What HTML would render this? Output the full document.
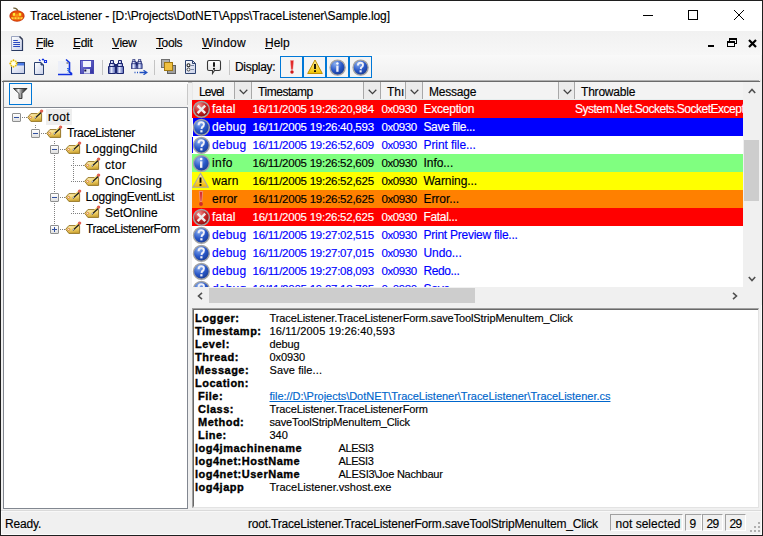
<!DOCTYPE html>
<html><head><meta charset="utf-8"><style>
html,body{margin:0;padding:0;width:763px;height:536px;overflow:hidden;background:#f0f0f0}
body{position:relative;font-family:"Liberation Sans",sans-serif}
.r{position:absolute;display:block}
.t{position:absolute;white-space:nowrap;font-family:"Liberation Sans",sans-serif;-webkit-text-stroke:0.15px currentColor}
</style></head><body>
<div class="r" style="left:0px;top:0px;width:763px;height:536px;background:#f0f0f0"></div>
<div class="r" style="left:0px;top:0px;width:763px;height:31px;background:#fff"></div>
<svg class="r" style="left:8px;top:6px" width="18" height="18" viewBox="0 0 18 18">
<defs><radialGradient id="pk" cx="50%" cy="50%" r="55%"><stop offset="0" stop-color="#ff8a10"/><stop offset="0.75" stop-color="#e04808"/><stop offset="1" stop-color="#b02808"/></radialGradient></defs>
<path d="M5.3 2.2 Q7.5 2 8.6 3 L10 4.6" stroke="#6a5a30" stroke-width="1.3" fill="none"/>
<ellipse cx="9" cy="10" rx="7.6" ry="5.8" fill="url(#pk)"/>
<path d="M4.8 7.2 L7.2 6.8 L7.2 9.8 L4.8 9.8Z M10.8 6.8 L13.2 7.2 L13.2 9.8 L10.8 9.8Z" fill="#ffe838"/>
<path d="M8.2 8.5 L9.8 8.5 L9 10Z" fill="#ffc020"/>
<path d="M3 11.2 L15 11.2 L14 13.2 L4 13.2Z" fill="#ffd838"/>
<path d="M6 11 V13.4 M9 11 V13.4 M12 11 V13.4" stroke="#e86010" stroke-width="0.8"/>
</svg>
<div class="t" style="left:30px;top:10px;font-size:12px;line-height:12px;color:#000;letter-spacing:-0.08px;">TraceListener - [D:\Projects\DotNET\Apps\TraceListener\Sample.log]</div>
<div class="r" style="left:643px;top:15px;width:10px;height:1px;background:#000"></div>
<div class="r" style="left:688px;top:10px;width:10px;height:10px;border:1px solid #000;box-sizing:border-box"></div>
<svg class="r" style="left:734px;top:10px" width="10" height="10" viewBox="0 0 10 10"><path d="M0 0 L10 10 M10 0 L0 10" stroke="#000" stroke-width="1"/></svg>
<div class="r" style="left:1px;top:31px;width:761px;height:24px;background:linear-gradient(#f1f1f1,#f7f7f7)"></div>
<svg class="r" style="left:10px;top:35px" width="16" height="17" viewBox="0 0 16 17">
<defs><linearGradient id="dg" x1="0" y1="0" x2="1" y2="1"><stop offset="0" stop-color="#fff"/><stop offset="1" stop-color="#c8d0e8"/></linearGradient></defs>
<path d="M1.5 1.5 H9.5 L12.5 4.5 V15.5 H1.5Z" fill="url(#dg)" stroke="#9aa4c0"/>
<path d="M12.5 4.5 V15.5 H1.5" fill="none" stroke="#283860" stroke-width="1.2"/>
<path d="M9.5 1.5 L12.5 4.5" stroke="#303850" stroke-width="1.6"/>
<path d="M3.2 5.5 H7.8 M3.2 7.5 H10 M3.2 9.5 H10 M3.2 11.5 H10" stroke="#2848c0" stroke-width="1.2"/>
</svg>
<div class="t" style="left:36px;top:37px;font-size:12px;line-height:12px;color:#000;letter-spacing:-0.45px;">File</div>
<div class="r" style="left:36px;top:48px;width:7px;height:1px;background:#000"></div>
<div class="t" style="left:73px;top:37px;font-size:12px;line-height:12px;color:#000;letter-spacing:-0.3px;">Edit</div>
<div class="r" style="left:73px;top:48px;width:7px;height:1px;background:#000"></div>
<div class="t" style="left:112px;top:37px;font-size:12px;line-height:12px;color:#000;letter-spacing:-0.4px;">View</div>
<div class="r" style="left:112px;top:48px;width:7px;height:1px;background:#000"></div>
<div class="t" style="left:156px;top:37px;font-size:12px;line-height:12px;color:#000;letter-spacing:-0.38px;">Tools</div>
<div class="r" style="left:156px;top:48px;width:7px;height:1px;background:#000"></div>
<div class="t" style="left:202px;top:37px;font-size:12px;line-height:12px;color:#000;letter-spacing:0.18px;">Window</div>
<div class="r" style="left:202px;top:48px;width:7px;height:1px;background:#000"></div>
<div class="t" style="left:265px;top:37px;font-size:12px;line-height:12px;color:#000;">Help</div>
<div class="r" style="left:265px;top:48px;width:7px;height:1px;background:#000"></div>
<div class="r" style="left:708px;top:45px;width:6px;height:2px;background:#000"></div>
<div class="r" style="left:729px;top:38px;width:8px;height:6px;border:1px solid #000;border-top-width:2px;box-sizing:border-box"></div>
<div class="r" style="left:727px;top:41px;width:8px;height:6px;border:1px solid #000;border-top-width:2px;box-sizing:border-box;background:#f6f6f6"></div>
<svg class="r" style="left:748px;top:39px" width="9" height="9" viewBox="0 0 9 9"><path d="M1 1 L8 8 M8 1 L1 8" stroke="#000" stroke-width="2.2"/></svg>
<div class="r" style="left:1px;top:55px;width:760px;height:28px;background:linear-gradient(#f9f9f9,#efefef);border-bottom:1px solid #c0c0c0;border-radius:0 0 4px 4px;box-sizing:border-box"></div>
<div class="r" style="left:2px;top:81px;width:758px;height:1px;background:#6a6a6a"></div>
<div class="r" style="left:3px;top:80px;width:756px;height:1px;background:#b0b0b0"></div>
<svg class="r" style="left:9px;top:58px" width="17" height="17" viewBox="0 0 17 17">
<defs><linearGradient id="wg" x1="0" y1="0" x2="1" y2="1"><stop offset="0" stop-color="#fff"/><stop offset="1" stop-color="#c4cce8"/></linearGradient></defs>
<rect x="2.5" y="4.5" width="13" height="11" fill="url(#wg)" stroke="#2d4270"/>
<rect x="3" y="5" width="12" height="2.5" fill="#4a7ae8"/>
<circle cx="4.5" cy="5.5" r="3.6" fill="#fff8b0"/>
<circle cx="4.5" cy="5.5" r="1.6" fill="#ffffff"/>
<g fill="#e0b000"><circle cx="4.5" cy="2.2" r="0.9"/><circle cx="4.5" cy="8.8" r="0.9"/><circle cx="1.2" cy="5.5" r="0.9"/><circle cx="7.8" cy="5.5" r="0.9"/><circle cx="2.2" cy="3.2" r="0.8"/><circle cx="6.8" cy="3.2" r="0.8"/><circle cx="2.2" cy="7.8" r="0.8"/><circle cx="6.8" cy="7.8" r="0.8"/></g>
</svg>
<svg class="r" style="left:33px;top:58px" width="15" height="18" viewBox="0 0 15 18">
<path d="M1.5 4.5 H8 L10.5 7 V16.5 H1.5Z" fill="url(#dg)" stroke="#2d4270" stroke-linejoin="miter"/>
<path d="M8 4.5 V7 H10.5" fill="#304070" stroke="#2d4270"/>
<path d="M6 1.5 L7.5 3 M9 1 L10 2 L11 1 M11.5 2.5 H13.5 V4.5 H11.5Z" stroke="#1030e0" fill="none" stroke-width="1.1"/>
</svg>
<svg class="r" style="left:56px;top:58px" width="17" height="18" viewBox="0 0 17 18">
<rect x="2" y="3" width="10" height="13" fill="#eceff8"/>
<path d="M10 1.5 L13.5 4.5 V14 L15.5 15.5 V16.5 H2" stroke="#1030e0" stroke-width="1.6" fill="none"/>
<path d="M11 10.5 H13 L11.5 12.5 H13.5 L12 14.5" stroke="#3a70e0" fill="none"/>
<path d="M10.5 5 L12.5 5" stroke="#404040"/>
</svg>
<svg class="r" style="left:79px;top:59px" width="16" height="16" viewBox="0 0 16 16">
<defs><linearGradient id="flg" x1="0" y1="0" x2="1" y2="1"><stop offset="0" stop-color="#8080e0"/><stop offset="1" stop-color="#3030a0"/></linearGradient></defs>
<rect x="1.5" y="1.5" width="13" height="13" fill="url(#flg)" stroke="#4848b0"/>
<rect x="4" y="2" width="8" height="6" fill="#f4f6fc"/>
<rect x="5" y="10" width="6" height="4.5" fill="#e0e4f4"/>
<rect x="5.3" y="10.5" width="2" height="2" fill="#101040"/>
</svg>
<div class="r" style="left:102px;top:60px;width:1px;height:15px;background:#c4c4c4"></div>
<svg class="r" style="left:108px;top:60px" width="16" height="14" viewBox="0 0 16 14"><defs><linearGradient id="bng" x1="0" y1="0" x2="1" y2="0"><stop offset="0" stop-color="#2a3a90"/><stop offset="0.4" stop-color="#e8ecff"/><stop offset="1" stop-color="#5060b0"/></linearGradient></defs><path d="M2.5 0.5 H5.5 V3.5 H6.5 V6.5 H7.5 V13.5 H0.5 V6.5 H1.5 V3.5 H2.5Z" fill="url(#bng)" stroke="#1c2670" stroke-width="1"/>
<path d="M1 6.5 H7" stroke="#1c2670"/><path d="M2 3.5 H6" stroke="#1c2670"/><path d="M10.5 0.5 H13.5 V3.5 H14.5 V6.5 H15.5 V13.5 H8.5 V6.5 H9.5 V3.5 H10.5Z" fill="url(#bng)" stroke="#1c2670" stroke-width="1"/>
<path d="M9 6.5 H15" stroke="#1c2670"/><path d="M10 3.5 H14" stroke="#1c2670"/><rect x="7" y="4" width="2" height="4" fill="#1c2670"/></svg>
<svg class="r" style="left:131px;top:59px" width="12" height="10" viewBox="0 0 12 10"><g transform="scale(0.72)"><path d="M2.5 0.5 H5.5 V3.5 H6.5 V6.5 H7.5 V13.5 H0.5 V6.5 H1.5 V3.5 H2.5Z" fill="url(#bng)" stroke="#1c2670" stroke-width="1"/>
<path d="M1 6.5 H7" stroke="#1c2670"/><path d="M2 3.5 H6" stroke="#1c2670"/><path d="M10.5 0.5 H13.5 V3.5 H14.5 V6.5 H15.5 V13.5 H8.5 V6.5 H9.5 V3.5 H10.5Z" fill="url(#bng)" stroke="#1c2670" stroke-width="1"/>
<path d="M9 6.5 H15" stroke="#1c2670"/><path d="M10 3.5 H14" stroke="#1c2670"/><rect x="7" y="4" width="2" height="5" fill="#1c2670"/></g></svg>
<svg class="r" style="left:133px;top:70px" width="15" height="5" viewBox="0 0 15 5"><path d="M1.5 2.5 H2.5 M4 2.5 H5 M6.5 2.5 H13" stroke="#2050c0" stroke-width="1.3"/><path d="M10.5 0.3 L13.8 2.5 L10.5 4.7" stroke="#2050c0" stroke-width="1.3" fill="none"/></svg>
<div class="r" style="left:154px;top:60px;width:1px;height:15px;background:#c4c4c4"></div>
<svg class="r" style="left:160px;top:58px" width="17" height="17" viewBox="0 0 17 17">
<rect x="1.5" y="1.5" width="8" height="8" fill="#b0b0b0" stroke="#707070"/>
<rect x="7.5" y="7.5" width="8" height="8" fill="#a0a0a0" stroke="#606060"/>
<rect x="4.5" y="4.5" width="8" height="8" fill="#f0c040" stroke="#a07810"/>
</svg>
<svg class="r" style="left:184px;top:58px" width="14" height="17" viewBox="0 0 14 17">
<path d="M1.5 2.5 H8.5 L11.5 5.5 V15.5 H1.5Z" fill="url(#dg)" stroke="#2d4270"/>
<path d="M8.5 2.5 V5.5 H11.5" fill="none" stroke="#2d4270"/>
<circle cx="4.5" cy="7.3" r="1.5" fill="#fff" stroke="#202020" stroke-width="1.1"/>
<circle cx="4.5" cy="11.5" r="1.5" fill="#fff" stroke="#404040" stroke-width="1"/>
<path d="M7 7.5 H10 M7 11.5 H10" stroke="#7888a8"/>
</svg>
<svg class="r" style="left:206px;top:59px" width="16" height="16" viewBox="0 0 16 16">
<defs><linearGradient id="sbg" x1="0" y1="0" x2="0" y2="1"><stop offset="0" stop-color="#ffffff"/><stop offset="1" stop-color="#e0e0e0"/></linearGradient></defs>
<path d="M3 1.5 H13 Q14.5 1.5 14.5 3 V10 Q14.5 11.5 13 11.5 H8.5 L6.5 14.5 V11.5 H3 Q1.5 11.5 1.5 10 V3 Q1.5 1.5 3 1.5Z" fill="url(#sbg)" stroke="#383838" stroke-width="1.1"/>
<path d="M8 3.2 V7.8" stroke="#000" stroke-width="1.8"/><rect x="7.1" y="8.9" width="1.8" height="1.8" fill="#000"/>
</svg>
<div class="r" style="left:229px;top:60px;width:1px;height:15px;background:#c4c4c4"></div>
<div class="t" style="left:235px;top:61px;font-size:12px;line-height:12px;color:#000;letter-spacing:-0.3px;">Display:</div>
<div class="r" style="left:280px;top:56px;width:23px;height:22px;border:1px solid #0078d7;background:#f4f4f4;box-sizing:border-box"></div>
<div class="r" style="left:303px;top:56px;width:23px;height:22px;border:1px solid #0078d7;background:#f4f4f4;box-sizing:border-box"></div>
<div class="r" style="left:326px;top:56px;width:23px;height:22px;border:1px solid #0078d7;background:#f4f4f4;box-sizing:border-box"></div>
<div class="r" style="left:349px;top:56px;width:23px;height:22px;border:1px solid #0078d7;background:#f4f4f4;box-sizing:border-box"></div>
<svg class="r" style="left:284px;top:59px" width="16" height="16" viewBox="0 0 16 16">
<path d="M6.5 1.5 H9.5 L8.8 10.5 H7.2Z" fill="#e02020" stroke="#e88" stroke-width="0.5"/>
<circle cx="8" cy="13" r="1.7" fill="#d01818"/>
</svg>
<svg class="r" style="left:307px;top:59px" width="16" height="16" viewBox="0 0 16 16">
<defs><linearGradient id="yg" x1="0" y1="0" x2="0" y2="1"><stop offset="0" stop-color="#fff4a0"/><stop offset="1" stop-color="#f0c000"/></linearGradient></defs>
<path d="M8 1 L15.3 14.5 H0.7Z" fill="url(#yg)" stroke="#c09000"/>
<path d="M8 5 V10" stroke="#000" stroke-width="1.8"/><rect x="7.1" y="11.2" width="1.8" height="1.8" fill="#000"/>
</svg>
<div class="r" style="left:3px;top:82px;width:185px;height:26px;background:linear-gradient(#fcfcfc,#f0f0f0);border-left:1px solid #828790;box-sizing:border-box"></div>
<div class="r" style="left:187px;top:84px;width:1px;height:21px;background:#c8c8c8"></div>
<div class="r" style="left:9px;top:83px;width:23px;height:22px;border:1px solid #0078d7;background:#f8f8f8;box-sizing:border-box"></div>
<svg class="r" style="left:13px;top:88px" width="15" height="11" viewBox="0 0 15 11">
<defs><linearGradient id="fg" x1="0" y1="0" x2="1" y2="0"><stop offset="0" stop-color="#181818"/><stop offset="0.35" stop-color="#f0f0f0"/><stop offset="0.65" stop-color="#707070"/><stop offset="1" stop-color="#101010"/></linearGradient></defs>
<path d="M0.5 0.5 H14 L9 5.5 V10.5 H6 V5.5Z" fill="url(#fg)" stroke="#202020" stroke-width="0.8"/>
</svg>
<div class="r" style="left:3px;top:107px;width:185px;height:402px;background:#fff;border:1px solid #828790;box-sizing:border-box"></div>
<div class="r" style="left:35px;top:125px;width:1px;height:1px;background:#808080"></div>
<div class="r" style="left:35px;top:127px;width:1px;height:1px;background:#808080"></div>
<div class="r" style="left:54px;top:141px;width:1px;height:1px;background:#808080"></div>
<div class="r" style="left:54px;top:143px;width:1px;height:1px;background:#808080"></div>
<div class="r" style="left:54px;top:145px;width:1px;height:1px;background:#808080"></div>
<div class="r" style="left:54px;top:147px;width:1px;height:1px;background:#808080"></div>
<div class="r" style="left:54px;top:149px;width:1px;height:1px;background:#808080"></div>
<div class="r" style="left:54px;top:151px;width:1px;height:1px;background:#808080"></div>
<div class="r" style="left:54px;top:153px;width:1px;height:1px;background:#808080"></div>
<div class="r" style="left:54px;top:155px;width:1px;height:1px;background:#808080"></div>
<div class="r" style="left:54px;top:157px;width:1px;height:1px;background:#808080"></div>
<div class="r" style="left:54px;top:159px;width:1px;height:1px;background:#808080"></div>
<div class="r" style="left:54px;top:161px;width:1px;height:1px;background:#808080"></div>
<div class="r" style="left:54px;top:163px;width:1px;height:1px;background:#808080"></div>
<div class="r" style="left:54px;top:165px;width:1px;height:1px;background:#808080"></div>
<div class="r" style="left:54px;top:167px;width:1px;height:1px;background:#808080"></div>
<div class="r" style="left:54px;top:169px;width:1px;height:1px;background:#808080"></div>
<div class="r" style="left:54px;top:171px;width:1px;height:1px;background:#808080"></div>
<div class="r" style="left:54px;top:173px;width:1px;height:1px;background:#808080"></div>
<div class="r" style="left:54px;top:175px;width:1px;height:1px;background:#808080"></div>
<div class="r" style="left:54px;top:177px;width:1px;height:1px;background:#808080"></div>
<div class="r" style="left:54px;top:179px;width:1px;height:1px;background:#808080"></div>
<div class="r" style="left:54px;top:181px;width:1px;height:1px;background:#808080"></div>
<div class="r" style="left:54px;top:183px;width:1px;height:1px;background:#808080"></div>
<div class="r" style="left:54px;top:185px;width:1px;height:1px;background:#808080"></div>
<div class="r" style="left:54px;top:187px;width:1px;height:1px;background:#808080"></div>
<div class="r" style="left:54px;top:189px;width:1px;height:1px;background:#808080"></div>
<div class="r" style="left:54px;top:191px;width:1px;height:1px;background:#808080"></div>
<div class="r" style="left:54px;top:193px;width:1px;height:1px;background:#808080"></div>
<div class="r" style="left:54px;top:195px;width:1px;height:1px;background:#808080"></div>
<div class="r" style="left:54px;top:197px;width:1px;height:1px;background:#808080"></div>
<div class="r" style="left:54px;top:199px;width:1px;height:1px;background:#808080"></div>
<div class="r" style="left:54px;top:201px;width:1px;height:1px;background:#808080"></div>
<div class="r" style="left:54px;top:203px;width:1px;height:1px;background:#808080"></div>
<div class="r" style="left:54px;top:205px;width:1px;height:1px;background:#808080"></div>
<div class="r" style="left:54px;top:207px;width:1px;height:1px;background:#808080"></div>
<div class="r" style="left:54px;top:209px;width:1px;height:1px;background:#808080"></div>
<div class="r" style="left:54px;top:211px;width:1px;height:1px;background:#808080"></div>
<div class="r" style="left:54px;top:213px;width:1px;height:1px;background:#808080"></div>
<div class="r" style="left:54px;top:215px;width:1px;height:1px;background:#808080"></div>
<div class="r" style="left:54px;top:217px;width:1px;height:1px;background:#808080"></div>
<div class="r" style="left:54px;top:219px;width:1px;height:1px;background:#808080"></div>
<div class="r" style="left:54px;top:221px;width:1px;height:1px;background:#808080"></div>
<div class="r" style="left:54px;top:223px;width:1px;height:1px;background:#808080"></div>
<div class="r" style="left:54px;top:225px;width:1px;height:1px;background:#808080"></div>
<div class="r" style="left:54px;top:227px;width:1px;height:1px;background:#808080"></div>
<div class="r" style="left:73px;top:157px;width:1px;height:1px;background:#808080"></div>
<div class="r" style="left:73px;top:159px;width:1px;height:1px;background:#808080"></div>
<div class="r" style="left:73px;top:161px;width:1px;height:1px;background:#808080"></div>
<div class="r" style="left:73px;top:163px;width:1px;height:1px;background:#808080"></div>
<div class="r" style="left:73px;top:165px;width:1px;height:1px;background:#808080"></div>
<div class="r" style="left:73px;top:167px;width:1px;height:1px;background:#808080"></div>
<div class="r" style="left:73px;top:169px;width:1px;height:1px;background:#808080"></div>
<div class="r" style="left:73px;top:171px;width:1px;height:1px;background:#808080"></div>
<div class="r" style="left:73px;top:173px;width:1px;height:1px;background:#808080"></div>
<div class="r" style="left:73px;top:175px;width:1px;height:1px;background:#808080"></div>
<div class="r" style="left:73px;top:177px;width:1px;height:1px;background:#808080"></div>
<div class="r" style="left:73px;top:179px;width:1px;height:1px;background:#808080"></div>
<div class="r" style="left:73px;top:205px;width:1px;height:1px;background:#808080"></div>
<div class="r" style="left:73px;top:207px;width:1px;height:1px;background:#808080"></div>
<div class="r" style="left:73px;top:209px;width:1px;height:1px;background:#808080"></div>
<div class="r" style="left:73px;top:211px;width:1px;height:1px;background:#808080"></div>
<div class="r" style="left:46px;top:109px;width:26px;height:16px;background:#eeeeee"></div>
<div class="r" style="left:12px;top:113px;width:9px;height:9px;border:1px solid #8e8f8f;border-radius:1px;background:linear-gradient(#fff,#e0e0e0);box-sizing:border-box"></div>
<div class="r" style="left:14px;top:117px;width:5px;height:1px;background:#3050a0"></div>
<div class="r" style="left:22px;top:117px;width:1px;height:1px;background:#808080"></div>
<div class="r" style="left:24px;top:117px;width:1px;height:1px;background:#808080"></div>
<div class="r" style="left:26px;top:117px;width:1px;height:1px;background:#808080"></div>
<svg class="r" style="left:27px;top:108px" width="17" height="16" viewBox="0 0 17 16">
<defs><linearGradient id="tg" x1="0" y1="0" x2="0.3" y2="1"><stop offset="0" stop-color="#fff6c8"/><stop offset="0.6" stop-color="#f0d068"/><stop offset="1" stop-color="#d0a838"/></linearGradient></defs>
<path d="M0.7 9.3 L3.9 5.6 H14.6 V13.4 H3.9Z" fill="url(#tg)" stroke="#98782a" stroke-width="1"/>
<circle cx="3.7" cy="9.4" r="1.05" fill="#fff" stroke="#d07020" stroke-width="0.8"/>
<path d="M8.2 9.2 L13.6 3.8" stroke="#f2d870" stroke-width="2.2"/>
<path d="M8 10.3 L14.4 4.2" stroke="#1e1e1e" stroke-width="1.2"/>
<path d="M6.6 10.6 L8.6 8.2 L9.4 10Z" fill="#b8b8c0"/>
<circle cx="14.6" cy="3.1" r="1.7" fill="#e06050"/>
</svg>
<div class="t" style="left:48px;top:111px;font-size:12px;line-height:12px;color:#000;letter-spacing:0.3px;">root</div>
<div class="r" style="left:31px;top:129px;width:9px;height:9px;border:1px solid #8e8f8f;border-radius:1px;background:linear-gradient(#fff,#e0e0e0);box-sizing:border-box"></div>
<div class="r" style="left:33px;top:133px;width:5px;height:1px;background:#3050a0"></div>
<div class="r" style="left:41px;top:133px;width:1px;height:1px;background:#808080"></div>
<div class="r" style="left:43px;top:133px;width:1px;height:1px;background:#808080"></div>
<div class="r" style="left:45px;top:133px;width:1px;height:1px;background:#808080"></div>
<svg class="r" style="left:46px;top:124px" width="17" height="16" viewBox="0 0 17 16">
<defs><linearGradient id="tg" x1="0" y1="0" x2="0.3" y2="1"><stop offset="0" stop-color="#fff6c8"/><stop offset="0.6" stop-color="#f0d068"/><stop offset="1" stop-color="#d0a838"/></linearGradient></defs>
<path d="M0.7 9.3 L3.9 5.6 H14.6 V13.4 H3.9Z" fill="url(#tg)" stroke="#98782a" stroke-width="1"/>
<circle cx="3.7" cy="9.4" r="1.05" fill="#fff" stroke="#d07020" stroke-width="0.8"/>
<path d="M8.2 9.2 L13.6 3.8" stroke="#f2d870" stroke-width="2.2"/>
<path d="M8 10.3 L14.4 4.2" stroke="#1e1e1e" stroke-width="1.2"/>
<path d="M6.6 10.6 L8.6 8.2 L9.4 10Z" fill="#b8b8c0"/>
<circle cx="14.6" cy="3.1" r="1.7" fill="#e06050"/>
</svg>
<div class="t" style="left:67px;top:127px;font-size:12px;line-height:12px;color:#000;letter-spacing:-0.39px;">TraceListener</div>
<div class="r" style="left:50px;top:145px;width:9px;height:9px;border:1px solid #8e8f8f;border-radius:1px;background:linear-gradient(#fff,#e0e0e0);box-sizing:border-box"></div>
<div class="r" style="left:52px;top:149px;width:5px;height:1px;background:#3050a0"></div>
<div class="r" style="left:60px;top:149px;width:1px;height:1px;background:#808080"></div>
<div class="r" style="left:62px;top:149px;width:1px;height:1px;background:#808080"></div>
<div class="r" style="left:64px;top:149px;width:1px;height:1px;background:#808080"></div>
<svg class="r" style="left:65px;top:140px" width="17" height="16" viewBox="0 0 17 16">
<defs><linearGradient id="tg" x1="0" y1="0" x2="0.3" y2="1"><stop offset="0" stop-color="#fff6c8"/><stop offset="0.6" stop-color="#f0d068"/><stop offset="1" stop-color="#d0a838"/></linearGradient></defs>
<path d="M0.7 9.3 L3.9 5.6 H14.6 V13.4 H3.9Z" fill="url(#tg)" stroke="#98782a" stroke-width="1"/>
<circle cx="3.7" cy="9.4" r="1.05" fill="#fff" stroke="#d07020" stroke-width="0.8"/>
<path d="M8.2 9.2 L13.6 3.8" stroke="#f2d870" stroke-width="2.2"/>
<path d="M8 10.3 L14.4 4.2" stroke="#1e1e1e" stroke-width="1.2"/>
<path d="M6.6 10.6 L8.6 8.2 L9.4 10Z" fill="#b8b8c0"/>
<circle cx="14.6" cy="3.1" r="1.7" fill="#e06050"/>
</svg>
<div class="t" style="left:85.6px;top:143px;font-size:12px;line-height:12px;color:#000;letter-spacing:0.15px;">LoggingChild</div>
<div class="r" style="left:71px;top:165px;width:1px;height:1px;background:#808080"></div>
<div class="r" style="left:73px;top:165px;width:1px;height:1px;background:#808080"></div>
<div class="r" style="left:75px;top:165px;width:1px;height:1px;background:#808080"></div>
<div class="r" style="left:77px;top:165px;width:1px;height:1px;background:#808080"></div>
<div class="r" style="left:79px;top:165px;width:1px;height:1px;background:#808080"></div>
<div class="r" style="left:81px;top:165px;width:1px;height:1px;background:#808080"></div>
<div class="r" style="left:83px;top:165px;width:1px;height:1px;background:#808080"></div>
<svg class="r" style="left:84px;top:156px" width="17" height="16" viewBox="0 0 17 16">
<defs><linearGradient id="tg" x1="0" y1="0" x2="0.3" y2="1"><stop offset="0" stop-color="#fff6c8"/><stop offset="0.6" stop-color="#f0d068"/><stop offset="1" stop-color="#d0a838"/></linearGradient></defs>
<path d="M0.7 9.3 L3.9 5.6 H14.6 V13.4 H3.9Z" fill="url(#tg)" stroke="#98782a" stroke-width="1"/>
<circle cx="3.7" cy="9.4" r="1.05" fill="#fff" stroke="#d07020" stroke-width="0.8"/>
<path d="M8.2 9.2 L13.6 3.8" stroke="#f2d870" stroke-width="2.2"/>
<path d="M8 10.3 L14.4 4.2" stroke="#1e1e1e" stroke-width="1.2"/>
<path d="M6.6 10.6 L8.6 8.2 L9.4 10Z" fill="#b8b8c0"/>
<circle cx="14.6" cy="3.1" r="1.7" fill="#e06050"/>
</svg>
<div class="t" style="left:105px;top:159px;font-size:12px;line-height:12px;color:#000;letter-spacing:0.3px;">ctor</div>
<div class="r" style="left:71px;top:181px;width:1px;height:1px;background:#808080"></div>
<div class="r" style="left:73px;top:181px;width:1px;height:1px;background:#808080"></div>
<div class="r" style="left:75px;top:181px;width:1px;height:1px;background:#808080"></div>
<div class="r" style="left:77px;top:181px;width:1px;height:1px;background:#808080"></div>
<div class="r" style="left:79px;top:181px;width:1px;height:1px;background:#808080"></div>
<div class="r" style="left:81px;top:181px;width:1px;height:1px;background:#808080"></div>
<div class="r" style="left:83px;top:181px;width:1px;height:1px;background:#808080"></div>
<svg class="r" style="left:84px;top:172px" width="17" height="16" viewBox="0 0 17 16">
<defs><linearGradient id="tg" x1="0" y1="0" x2="0.3" y2="1"><stop offset="0" stop-color="#fff6c8"/><stop offset="0.6" stop-color="#f0d068"/><stop offset="1" stop-color="#d0a838"/></linearGradient></defs>
<path d="M0.7 9.3 L3.9 5.6 H14.6 V13.4 H3.9Z" fill="url(#tg)" stroke="#98782a" stroke-width="1"/>
<circle cx="3.7" cy="9.4" r="1.05" fill="#fff" stroke="#d07020" stroke-width="0.8"/>
<path d="M8.2 9.2 L13.6 3.8" stroke="#f2d870" stroke-width="2.2"/>
<path d="M8 10.3 L14.4 4.2" stroke="#1e1e1e" stroke-width="1.2"/>
<path d="M6.6 10.6 L8.6 8.2 L9.4 10Z" fill="#b8b8c0"/>
<circle cx="14.6" cy="3.1" r="1.7" fill="#e06050"/>
</svg>
<div class="t" style="left:105px;top:175px;font-size:12px;line-height:12px;color:#000;letter-spacing:0.11px;">OnClosing</div>
<div class="r" style="left:50px;top:193px;width:9px;height:9px;border:1px solid #8e8f8f;border-radius:1px;background:linear-gradient(#fff,#e0e0e0);box-sizing:border-box"></div>
<div class="r" style="left:52px;top:197px;width:5px;height:1px;background:#3050a0"></div>
<div class="r" style="left:60px;top:197px;width:1px;height:1px;background:#808080"></div>
<div class="r" style="left:62px;top:197px;width:1px;height:1px;background:#808080"></div>
<div class="r" style="left:64px;top:197px;width:1px;height:1px;background:#808080"></div>
<svg class="r" style="left:65px;top:188px" width="17" height="16" viewBox="0 0 17 16">
<defs><linearGradient id="tg" x1="0" y1="0" x2="0.3" y2="1"><stop offset="0" stop-color="#fff6c8"/><stop offset="0.6" stop-color="#f0d068"/><stop offset="1" stop-color="#d0a838"/></linearGradient></defs>
<path d="M0.7 9.3 L3.9 5.6 H14.6 V13.4 H3.9Z" fill="url(#tg)" stroke="#98782a" stroke-width="1"/>
<circle cx="3.7" cy="9.4" r="1.05" fill="#fff" stroke="#d07020" stroke-width="0.8"/>
<path d="M8.2 9.2 L13.6 3.8" stroke="#f2d870" stroke-width="2.2"/>
<path d="M8 10.3 L14.4 4.2" stroke="#1e1e1e" stroke-width="1.2"/>
<path d="M6.6 10.6 L8.6 8.2 L9.4 10Z" fill="#b8b8c0"/>
<circle cx="14.6" cy="3.1" r="1.7" fill="#e06050"/>
</svg>
<div class="t" style="left:85.6px;top:191px;font-size:12px;line-height:12px;color:#000;letter-spacing:-0.22px;">LoggingEventList</div>
<div class="r" style="left:71px;top:213px;width:1px;height:1px;background:#808080"></div>
<div class="r" style="left:73px;top:213px;width:1px;height:1px;background:#808080"></div>
<div class="r" style="left:75px;top:213px;width:1px;height:1px;background:#808080"></div>
<div class="r" style="left:77px;top:213px;width:1px;height:1px;background:#808080"></div>
<div class="r" style="left:79px;top:213px;width:1px;height:1px;background:#808080"></div>
<div class="r" style="left:81px;top:213px;width:1px;height:1px;background:#808080"></div>
<div class="r" style="left:83px;top:213px;width:1px;height:1px;background:#808080"></div>
<svg class="r" style="left:84px;top:204px" width="17" height="16" viewBox="0 0 17 16">
<defs><linearGradient id="tg" x1="0" y1="0" x2="0.3" y2="1"><stop offset="0" stop-color="#fff6c8"/><stop offset="0.6" stop-color="#f0d068"/><stop offset="1" stop-color="#d0a838"/></linearGradient></defs>
<path d="M0.7 9.3 L3.9 5.6 H14.6 V13.4 H3.9Z" fill="url(#tg)" stroke="#98782a" stroke-width="1"/>
<circle cx="3.7" cy="9.4" r="1.05" fill="#fff" stroke="#d07020" stroke-width="0.8"/>
<path d="M8.2 9.2 L13.6 3.8" stroke="#f2d870" stroke-width="2.2"/>
<path d="M8 10.3 L14.4 4.2" stroke="#1e1e1e" stroke-width="1.2"/>
<path d="M6.6 10.6 L8.6 8.2 L9.4 10Z" fill="#b8b8c0"/>
<circle cx="14.6" cy="3.1" r="1.7" fill="#e06050"/>
</svg>
<div class="t" style="left:105px;top:207px;font-size:12px;line-height:12px;color:#000;">SetOnline</div>
<div class="r" style="left:50px;top:225px;width:9px;height:9px;border:1px solid #8e8f8f;border-radius:1px;background:linear-gradient(#fff,#e0e0e0);box-sizing:border-box"></div>
<div class="r" style="left:52px;top:229px;width:5px;height:1px;background:#3050a0"></div>
<div class="r" style="left:54px;top:227px;width:1px;height:5px;background:#3050a0"></div>
<div class="r" style="left:60px;top:229px;width:1px;height:1px;background:#808080"></div>
<div class="r" style="left:62px;top:229px;width:1px;height:1px;background:#808080"></div>
<div class="r" style="left:64px;top:229px;width:1px;height:1px;background:#808080"></div>
<svg class="r" style="left:65px;top:220px" width="17" height="16" viewBox="0 0 17 16">
<defs><linearGradient id="tg" x1="0" y1="0" x2="0.3" y2="1"><stop offset="0" stop-color="#fff6c8"/><stop offset="0.6" stop-color="#f0d068"/><stop offset="1" stop-color="#d0a838"/></linearGradient></defs>
<path d="M0.7 9.3 L3.9 5.6 H14.6 V13.4 H3.9Z" fill="url(#tg)" stroke="#98782a" stroke-width="1"/>
<circle cx="3.7" cy="9.4" r="1.05" fill="#fff" stroke="#d07020" stroke-width="0.8"/>
<path d="M8.2 9.2 L13.6 3.8" stroke="#f2d870" stroke-width="2.2"/>
<path d="M8 10.3 L14.4 4.2" stroke="#1e1e1e" stroke-width="1.2"/>
<path d="M6.6 10.6 L8.6 8.2 L9.4 10Z" fill="#b8b8c0"/>
<circle cx="14.6" cy="3.1" r="1.7" fill="#e06050"/>
</svg>
<div class="t" style="left:86px;top:223px;font-size:12px;line-height:12px;color:#000;letter-spacing:-0.41px;">TraceListenerForm</div>
<div class="r" style="left:192px;top:82px;width:571px;height:224px;background:#f0f0f0"></div>
<div class="r" style="left:192px;top:82px;width:551px;height:205px;background:#fff"></div>
<div class="r" style="left:192px;top:82px;width:1px;height:205px;background:#e8e8e8"></div>
<div class="r" style="left:193px;top:82px;width:550px;height:18px;background:#f3f3f3"></div>
<div class="r" style="left:234px;top:82px;width:18px;height:17px;background:#ebebeb;border-left:1px solid #a8a8a8;border-right:1px solid #a8a8a8;box-sizing:border-box"></div>
<svg class="r" style="left:239px;top:89px" width="9" height="6" viewBox="0 0 9 6"><path d="M0.7 0.7 L4.5 4.6 L8.3 0.7" stroke="#404040" stroke-width="1.25" fill="none"/></svg>
<div class="r" style="left:363px;top:82px;width:18px;height:17px;background:#ebebeb;border-left:1px solid #a8a8a8;border-right:1px solid #a8a8a8;box-sizing:border-box"></div>
<svg class="r" style="left:368px;top:89px" width="9" height="6" viewBox="0 0 9 6"><path d="M0.7 0.7 L4.5 4.6 L8.3 0.7" stroke="#404040" stroke-width="1.25" fill="none"/></svg>
<div class="r" style="left:405px;top:82px;width:18px;height:17px;background:#ebebeb;border-left:1px solid #a8a8a8;border-right:1px solid #a8a8a8;box-sizing:border-box"></div>
<svg class="r" style="left:410px;top:89px" width="9" height="6" viewBox="0 0 9 6"><path d="M0.7 0.7 L4.5 4.6 L8.3 0.7" stroke="#404040" stroke-width="1.25" fill="none"/></svg>
<div class="r" style="left:558px;top:82px;width:17px;height:17px;background:#ebebeb;border-left:1px solid #a8a8a8;border-right:1px solid #a8a8a8;box-sizing:border-box"></div>
<svg class="r" style="left:563px;top:89px" width="9" height="6" viewBox="0 0 9 6"><path d="M0.7 0.7 L4.5 4.6 L8.3 0.7" stroke="#404040" stroke-width="1.25" fill="none"/></svg>
<div class="r" style="left:193px;top:99px;width:550px;height:1px;background:#e6eeee"></div>
<div class="t" style="left:199px;top:86px;font-size:12px;line-height:12px;color:#000;letter-spacing:-0.8px;">Level</div>
<div class="t" style="left:258px;top:86px;font-size:12px;line-height:12px;color:#000;letter-spacing:-0.45px;">Timestamp</div>
<div class="t" style="left:387px;top:86px;font-size:12px;line-height:12px;color:#000;">Thı</div>
<div class="t" style="left:429px;top:86px;font-size:12px;line-height:12px;color:#000;letter-spacing:-0.2px;">Message</div>
<div class="t" style="left:581px;top:86px;font-size:12px;line-height:12px;color:#000;letter-spacing:-0.2px;">Throwable</div>
<svg class="r" style="left:328.5px;top:58.5px" width="17" height="17" viewBox="0.4 0.4 17.8 17.8"><defs><radialGradient id="rgi3" cx="35%" cy="25%" r="80%"><stop offset="0" stop-color="#8ab0f0"/><stop offset="0.55" stop-color="#2a58c8"/><stop offset="1" stop-color="#173890"/></radialGradient></defs>
<circle cx="9.4" cy="9.4" r="7.9" fill="url(#rgi3)" stroke="#a4a4a4" stroke-width="1.4"/><circle cx="9.2" cy="5" r="1.3" fill="#fff"/><path d="M9.2 7.3 V13.8" stroke="#f0f0f8" stroke-width="2.4"/></svg>
<svg class="r" style="left:351.5px;top:58.5px" width="17" height="17" viewBox="0.4 0.4 17.8 17.8"><defs><radialGradient id="rgq3" cx="35%" cy="25%" r="80%"><stop offset="0" stop-color="#8ab0f0"/><stop offset="0.55" stop-color="#2a58c8"/><stop offset="1" stop-color="#173890"/></radialGradient></defs>
<circle cx="9.4" cy="9.4" r="7.9" fill="url(#rgq3)" stroke="#a4a4a4" stroke-width="1.4"/><path d="M6.6 7.2 Q6.6 4.3 9.2 4.3 Q11.9 4.3 11.9 6.6 Q11.9 8.3 10 9.3 L9.5 11" fill="none" stroke="#f0f0f8" stroke-width="2"/><rect x="8.3" y="12.2" width="2.2" height="2.2" fill="#f0f0f8"/></svg>
<div class="r" style="left:192px;top:100px;width:551px;height:187px;overflow:hidden">
<div class="r" style="left:0;top:0px;width:551px;height:18px;background:#ff0000"></div>
<svg class="r" style="left:0px;top:0px" width="18" height="18" viewBox="0 0 18 18"><defs><radialGradient id="rgx" cx="35%" cy="25%" r="80%"><stop offset="0" stop-color="#f09090"/><stop offset="0.55" stop-color="#c42222"/><stop offset="1" stop-color="#8a1010"/></radialGradient></defs>
<circle cx="9.4" cy="9.4" r="7.9" fill="url(#rgx)" stroke="#a4a4a4" stroke-width="1.4"/><path d="M5.6 5.6 L13.2 13.2 M13.2 5.6 L5.6 13.2" stroke="#eeeeee" stroke-width="2.4"/></svg>
<div class="t" style="left:20px;top:3px;font-size:12px;line-height:12px;color:#fff;letter-spacing:0.2px">fatal</div>
<div class="t" style="left:60.5px;top:3px;font-size:11.5px;line-height:12px;color:#fff;letter-spacing:-0.25px">16/11/2005 19:26:20,984</div>
<div class="t" style="left:189.5px;top:3px;font-size:11.5px;line-height:12px;color:#fff;letter-spacing:-0.4px">0x0930</div>
<div class="t" style="left:231.5px;top:3px;font-size:12px;line-height:12px;color:#fff;letter-spacing:-0.22px">Exception</div>
<div class="t" style="left:383px;top:3px;font-size:12px;line-height:12px;color:#fff;letter-spacing:-0.5px">System.Net.Sockets.SocketExcept</div>
<div class="r" style="left:0;top:18px;width:551px;height:18px;background:#0000ff"></div>
<svg class="r" style="left:0px;top:18px" width="18" height="18" viewBox="0 0 18 18"><defs><radialGradient id="rgq" cx="35%" cy="25%" r="80%"><stop offset="0" stop-color="#8ab0f0"/><stop offset="0.55" stop-color="#2a58c8"/><stop offset="1" stop-color="#173890"/></radialGradient></defs>
<circle cx="9.4" cy="9.4" r="7.9" fill="url(#rgq)" stroke="#a4a4a4" stroke-width="1.4"/><path d="M6.6 7.2 Q6.6 4.3 9.2 4.3 Q11.9 4.3 11.9 6.6 Q11.9 8.3 10 9.3 L9.5 11" fill="none" stroke="#f0f0f8" stroke-width="2"/><rect x="8.3" y="12.2" width="2.2" height="2.2" fill="#f0f0f8"/></svg>
<div class="t" style="left:20px;top:21px;font-size:12px;line-height:12px;color:#fff;letter-spacing:0.2px">debug</div>
<div class="t" style="left:60.5px;top:21px;font-size:11.5px;line-height:12px;color:#fff;letter-spacing:-0.25px">16/11/2005 19:26:40,593</div>
<div class="t" style="left:189.5px;top:21px;font-size:11.5px;line-height:12px;color:#fff;letter-spacing:-0.4px">0x0930</div>
<div class="t" style="left:231.5px;top:21px;font-size:12px;line-height:12px;color:#fff;letter-spacing:-0.39px">Save file...</div>
<div class="r" style="left:0;top:36px;width:551px;height:18px;background:#fff"></div>
<svg class="r" style="left:0px;top:36px" width="18" height="18" viewBox="0 0 18 18"><defs><radialGradient id="rgq" cx="35%" cy="25%" r="80%"><stop offset="0" stop-color="#8ab0f0"/><stop offset="0.55" stop-color="#2a58c8"/><stop offset="1" stop-color="#173890"/></radialGradient></defs>
<circle cx="9.4" cy="9.4" r="7.9" fill="url(#rgq)" stroke="#a4a4a4" stroke-width="1.4"/><path d="M6.6 7.2 Q6.6 4.3 9.2 4.3 Q11.9 4.3 11.9 6.6 Q11.9 8.3 10 9.3 L9.5 11" fill="none" stroke="#f0f0f8" stroke-width="2"/><rect x="8.3" y="12.2" width="2.2" height="2.2" fill="#f0f0f8"/></svg>
<div class="t" style="left:20px;top:39px;font-size:12px;line-height:12px;color:#0000ff;letter-spacing:0.2px">debug</div>
<div class="t" style="left:60.5px;top:39px;font-size:11.5px;line-height:12px;color:#0000ff;letter-spacing:-0.25px">16/11/2005 19:26:52,609</div>
<div class="t" style="left:189.5px;top:39px;font-size:11.5px;line-height:12px;color:#0000ff;letter-spacing:-0.4px">0x0930</div>
<div class="t" style="left:231.5px;top:39px;font-size:12px;line-height:12px;color:#0000ff;letter-spacing:-0.08px">Print file...</div>
<div class="r" style="left:0;top:54px;width:551px;height:18px;background:#80ff80"></div>
<svg class="r" style="left:0px;top:54px" width="18" height="18" viewBox="0 0 18 18"><defs><radialGradient id="rgi" cx="35%" cy="25%" r="80%"><stop offset="0" stop-color="#8ab0f0"/><stop offset="0.55" stop-color="#2a58c8"/><stop offset="1" stop-color="#173890"/></radialGradient></defs>
<circle cx="9.4" cy="9.4" r="7.9" fill="url(#rgi)" stroke="#a4a4a4" stroke-width="1.4"/><circle cx="9.2" cy="5" r="1.3" fill="#fff"/><path d="M9.2 7.3 V13.8" stroke="#f0f0f8" stroke-width="2.4"/></svg>
<div class="t" style="left:20px;top:57px;font-size:12px;line-height:12px;color:#000;letter-spacing:0.4px">info</div>
<div class="t" style="left:60.5px;top:57px;font-size:11.5px;line-height:12px;color:#000;letter-spacing:-0.25px">16/11/2005 19:26:52,609</div>
<div class="t" style="left:189.5px;top:57px;font-size:11.5px;line-height:12px;color:#000;letter-spacing:-0.4px">0x0930</div>
<div class="t" style="left:231.5px;top:57px;font-size:12px;line-height:12px;color:#000;letter-spacing:-0.05px">Info...</div>
<div class="r" style="left:0;top:72px;width:551px;height:18px;background:#ffff00"></div>
<svg class="r" style="left:0px;top:72px" width="18" height="18" viewBox="0 0 18 18"><defs><linearGradient id="ywg" x1="0" y1="0" x2="0" y2="1"><stop offset="0" stop-color="#fff0a0"/><stop offset="1" stop-color="#f0b800"/></linearGradient></defs>
<path d="M8.5 1.3 L16.3 15.3 H0.7Z" fill="url(#ywg)" stroke="#a8a8a8" stroke-width="1.1"/>
<path d="M8.5 5.5 V10.8" stroke="#000" stroke-width="1.9"/><rect x="7.55" y="12" width="1.9" height="1.9" fill="#000"/></svg>
<div class="t" style="left:20px;top:75px;font-size:12px;line-height:12px;color:#000;letter-spacing:0.1px">warn</div>
<div class="t" style="left:60.5px;top:75px;font-size:11.5px;line-height:12px;color:#000;letter-spacing:-0.25px">16/11/2005 19:26:52,625</div>
<div class="t" style="left:189.5px;top:75px;font-size:11.5px;line-height:12px;color:#000;letter-spacing:-0.4px">0x0930</div>
<div class="t" style="left:231.5px;top:75px;font-size:12px;line-height:12px;color:#000;letter-spacing:-0.06px">Warning...</div>
<div class="r" style="left:0;top:90px;width:551px;height:18px;background:#ff8000"></div>
<svg class="r" style="left:0px;top:90px" width="18" height="18" viewBox="0 0 18 18"><path d="M7.3 1.5 H10.7 L9.8 11.5 H8.2Z" fill="#d83030" stroke="#f0a0a0" stroke-width="0.7"/>
<circle cx="9" cy="14" r="1.9" fill="#d02828"/></svg>
<div class="t" style="left:20px;top:93px;font-size:12px;line-height:12px;color:#000;letter-spacing:0px">error</div>
<div class="t" style="left:60.5px;top:93px;font-size:11.5px;line-height:12px;color:#000;letter-spacing:-0.25px">16/11/2005 19:26:52,625</div>
<div class="t" style="left:189.5px;top:93px;font-size:11.5px;line-height:12px;color:#000;letter-spacing:-0.4px">0x0930</div>
<div class="t" style="left:231.5px;top:93px;font-size:12px;line-height:12px;color:#000;letter-spacing:-0.07px">Error...</div>
<div class="r" style="left:0;top:108px;width:551px;height:18px;background:#ff0000"></div>
<svg class="r" style="left:0px;top:108px" width="18" height="18" viewBox="0 0 18 18"><defs><radialGradient id="rgx" cx="35%" cy="25%" r="80%"><stop offset="0" stop-color="#f09090"/><stop offset="0.55" stop-color="#c42222"/><stop offset="1" stop-color="#8a1010"/></radialGradient></defs>
<circle cx="9.4" cy="9.4" r="7.9" fill="url(#rgx)" stroke="#a4a4a4" stroke-width="1.4"/><path d="M5.6 5.6 L13.2 13.2 M13.2 5.6 L5.6 13.2" stroke="#eeeeee" stroke-width="2.4"/></svg>
<div class="t" style="left:20px;top:111px;font-size:12px;line-height:12px;color:#fff;letter-spacing:0.2px">fatal</div>
<div class="t" style="left:60.5px;top:111px;font-size:11.5px;line-height:12px;color:#fff;letter-spacing:-0.25px">16/11/2005 19:26:52,625</div>
<div class="t" style="left:189.5px;top:111px;font-size:11.5px;line-height:12px;color:#fff;letter-spacing:-0.4px">0x0930</div>
<div class="t" style="left:231.5px;top:111px;font-size:12px;line-height:12px;color:#fff;letter-spacing:-0.33px">Fatal...</div>
<div class="r" style="left:0;top:126px;width:551px;height:18px;background:#fff"></div>
<svg class="r" style="left:0px;top:126px" width="18" height="18" viewBox="0 0 18 18"><defs><radialGradient id="rgq" cx="35%" cy="25%" r="80%"><stop offset="0" stop-color="#8ab0f0"/><stop offset="0.55" stop-color="#2a58c8"/><stop offset="1" stop-color="#173890"/></radialGradient></defs>
<circle cx="9.4" cy="9.4" r="7.9" fill="url(#rgq)" stroke="#a4a4a4" stroke-width="1.4"/><path d="M6.6 7.2 Q6.6 4.3 9.2 4.3 Q11.9 4.3 11.9 6.6 Q11.9 8.3 10 9.3 L9.5 11" fill="none" stroke="#f0f0f8" stroke-width="2"/><rect x="8.3" y="12.2" width="2.2" height="2.2" fill="#f0f0f8"/></svg>
<div class="t" style="left:20px;top:129px;font-size:12px;line-height:12px;color:#0000ff;letter-spacing:0.2px">debug</div>
<div class="t" style="left:60.5px;top:129px;font-size:11.5px;line-height:12px;color:#0000ff;letter-spacing:-0.25px">16/11/2005 19:27:02,515</div>
<div class="t" style="left:189.5px;top:129px;font-size:11.5px;line-height:12px;color:#0000ff;letter-spacing:-0.4px">0x0930</div>
<div class="t" style="left:231.5px;top:129px;font-size:12px;line-height:12px;color:#0000ff;letter-spacing:-0.25px">Print Preview file...</div>
<div class="r" style="left:0;top:144px;width:551px;height:18px;background:#fff"></div>
<svg class="r" style="left:0px;top:144px" width="18" height="18" viewBox="0 0 18 18"><defs><radialGradient id="rgq" cx="35%" cy="25%" r="80%"><stop offset="0" stop-color="#8ab0f0"/><stop offset="0.55" stop-color="#2a58c8"/><stop offset="1" stop-color="#173890"/></radialGradient></defs>
<circle cx="9.4" cy="9.4" r="7.9" fill="url(#rgq)" stroke="#a4a4a4" stroke-width="1.4"/><path d="M6.6 7.2 Q6.6 4.3 9.2 4.3 Q11.9 4.3 11.9 6.6 Q11.9 8.3 10 9.3 L9.5 11" fill="none" stroke="#f0f0f8" stroke-width="2"/><rect x="8.3" y="12.2" width="2.2" height="2.2" fill="#f0f0f8"/></svg>
<div class="t" style="left:20px;top:147px;font-size:12px;line-height:12px;color:#0000ff;letter-spacing:0.2px">debug</div>
<div class="t" style="left:60.5px;top:147px;font-size:11.5px;line-height:12px;color:#0000ff;letter-spacing:-0.25px">16/11/2005 19:27:07,015</div>
<div class="t" style="left:189.5px;top:147px;font-size:11.5px;line-height:12px;color:#0000ff;letter-spacing:-0.4px">0x0930</div>
<div class="t" style="left:231.5px;top:147px;font-size:12px;line-height:12px;color:#0000ff;letter-spacing:-0.08px">Undo...</div>
<div class="r" style="left:0;top:162px;width:551px;height:18px;background:#fff"></div>
<svg class="r" style="left:0px;top:162px" width="18" height="18" viewBox="0 0 18 18"><defs><radialGradient id="rgq" cx="35%" cy="25%" r="80%"><stop offset="0" stop-color="#8ab0f0"/><stop offset="0.55" stop-color="#2a58c8"/><stop offset="1" stop-color="#173890"/></radialGradient></defs>
<circle cx="9.4" cy="9.4" r="7.9" fill="url(#rgq)" stroke="#a4a4a4" stroke-width="1.4"/><path d="M6.6 7.2 Q6.6 4.3 9.2 4.3 Q11.9 4.3 11.9 6.6 Q11.9 8.3 10 9.3 L9.5 11" fill="none" stroke="#f0f0f8" stroke-width="2"/><rect x="8.3" y="12.2" width="2.2" height="2.2" fill="#f0f0f8"/></svg>
<div class="t" style="left:20px;top:165px;font-size:12px;line-height:12px;color:#0000ff;letter-spacing:0.2px">debug</div>
<div class="t" style="left:60.5px;top:165px;font-size:11.5px;line-height:12px;color:#0000ff;letter-spacing:-0.25px">16/11/2005 19:27:08,093</div>
<div class="t" style="left:189.5px;top:165px;font-size:11.5px;line-height:12px;color:#0000ff;letter-spacing:-0.4px">0x0930</div>
<div class="t" style="left:231.5px;top:165px;font-size:12px;line-height:12px;color:#0000ff;letter-spacing:-0.4px">Redo...</div>
<div class="r" style="left:0;top:180px;width:551px;height:18px;background:#fff"></div>
<svg class="r" style="left:0px;top:180px" width="18" height="18" viewBox="0 0 18 18"><defs><radialGradient id="rgq" cx="35%" cy="25%" r="80%"><stop offset="0" stop-color="#8ab0f0"/><stop offset="0.55" stop-color="#2a58c8"/><stop offset="1" stop-color="#173890"/></radialGradient></defs>
<circle cx="9.4" cy="9.4" r="7.9" fill="url(#rgq)" stroke="#a4a4a4" stroke-width="1.4"/><path d="M6.6 7.2 Q6.6 4.3 9.2 4.3 Q11.9 4.3 11.9 6.6 Q11.9 8.3 10 9.3 L9.5 11" fill="none" stroke="#f0f0f8" stroke-width="2"/><rect x="8.3" y="12.2" width="2.2" height="2.2" fill="#f0f0f8"/></svg>
<div class="t" style="left:20px;top:183px;font-size:12px;line-height:12px;color:#0000ff;letter-spacing:0.2px">debug</div>
<div class="t" style="left:60.5px;top:183px;font-size:11.5px;line-height:12px;color:#0000ff;letter-spacing:-0.25px">16/11/2005 19:27:13,765</div>
<div class="t" style="left:189.5px;top:183px;font-size:11.5px;line-height:12px;color:#0000ff;letter-spacing:-0.4px">0x0930</div>
<div class="t" style="left:231.5px;top:183px;font-size:12px;line-height:12px;color:#0000ff;letter-spacing:-0.2px">Save...</div>
</div>
<div class="r" style="left:192px;top:118px;width:1px;height:18px;background:#fff"></div>
<div class="r" style="left:192px;top:137px;width:1px;height:16px;background:#0000ff"></div>
<div class="r" style="left:743px;top:82px;width:19px;height:205px;background:#f0f0f0"></div>
<svg class="r" style="left:748px;top:88px" width="8" height="6" viewBox="0 0 8 6"><path d="M0.8 5 L4 1.5 L7.2 5" stroke="#505050" stroke-width="1.6" fill="none"/></svg>
<div class="r" style="left:744px;top:140px;width:15px;height:61px;background:#cdcdcd"></div>
<svg class="r" style="left:748px;top:276px" width="8" height="6" viewBox="0 0 8 6"><path d="M0.8 1 L4 4.5 L7.2 1" stroke="#505050" stroke-width="1.6" fill="none"/></svg>
<div class="r" style="left:192px;top:287px;width:551px;height:18px;background:#f0f0f0"></div>
<svg class="r" style="left:197px;top:292px" width="6" height="8" viewBox="0 0 6 8"><path d="M5 0.8 L1.5 4 L5 7.2" stroke="#505050" stroke-width="1.6" fill="none"/></svg>
<div class="r" style="left:209px;top:288px;width:266px;height:15px;background:#cdcdcd"></div>
<svg class="r" style="left:732px;top:292px" width="6" height="8" viewBox="0 0 6 8"><path d="M1 0.8 L4.5 4 L1 7.2" stroke="#505050" stroke-width="1.6" fill="none"/></svg>
<div class="r" style="left:192px;top:308px;width:567px;height:200px;background:#fff;border-top:2px solid #a0a0a0;border-left:2px solid #a0a0a0;border-right:1px solid #e3e3e3;border-bottom:1px solid #e3e3e3;box-sizing:border-box"></div>
<div class="r" style="left:193px;top:309px;width:565px;height:1px;background:#696969"></div>
<div class="r" style="left:193px;top:309px;width:1px;height:197px;background:#696969"></div>
<div class="t" style="left:195px;top:313px;font-size:11px;line-height:11px;color:#000;font-weight:bold;letter-spacing:0.5px;-webkit-text-stroke:0.35px #000;">Logger:</div>
<div class="t" style="left:269.5px;top:313px;font-size:11px;line-height:11px;color:#000;letter-spacing:-0.11px;">TraceListener.TraceListenerForm.saveToolStripMenuItem_Click</div>
<div class="t" style="left:195px;top:326px;font-size:11px;line-height:11px;color:#000;font-weight:bold;letter-spacing:0.5px;-webkit-text-stroke:0.35px #000;">Timestamp:</div>
<div class="t" style="left:269.5px;top:326px;font-size:11px;line-height:11px;color:#000;letter-spacing:0.17px;">16/11/2005 19:26:40,593</div>
<div class="t" style="left:195px;top:339px;font-size:11px;line-height:11px;color:#000;font-weight:bold;letter-spacing:0.5px;-webkit-text-stroke:0.35px #000;">Level:</div>
<div class="t" style="left:269.5px;top:339px;font-size:11px;line-height:11px;color:#000;letter-spacing:-0.1px;">debug</div>
<div class="t" style="left:195px;top:352px;font-size:11px;line-height:11px;color:#000;font-weight:bold;letter-spacing:0.5px;-webkit-text-stroke:0.35px #000;">Thread:</div>
<div class="t" style="left:269.5px;top:352px;font-size:11px;line-height:11px;color:#000;letter-spacing:-0.1px;">0x0930</div>
<div class="t" style="left:195px;top:365px;font-size:11px;line-height:11px;color:#000;font-weight:bold;letter-spacing:0.5px;-webkit-text-stroke:0.35px #000;">Message:</div>
<div class="t" style="left:269.5px;top:365px;font-size:11px;line-height:11px;color:#000;letter-spacing:0.1px;">Save file...</div>
<div class="t" style="left:195px;top:378px;font-size:11px;line-height:11px;color:#000;font-weight:bold;letter-spacing:0.5px;-webkit-text-stroke:0.35px #000;">Location:</div>
<div class="t" style="left:198px;top:391px;font-size:11px;line-height:11px;color:#000;font-weight:bold;letter-spacing:0.5px;-webkit-text-stroke:0.35px #000;">File:</div>
<div class="t" style="left:269.5px;top:391px;font-size:11px;line-height:11px;color:#0066cc;letter-spacing:-0.02px;text-decoration:underline;">file://D:\Projects\DotNET\TraceListener\TraceListener\TraceListener.cs</div>
<div class="t" style="left:198px;top:404px;font-size:11px;line-height:11px;color:#000;font-weight:bold;letter-spacing:0.5px;-webkit-text-stroke:0.35px #000;">Class:</div>
<div class="t" style="left:269.5px;top:404px;font-size:11px;line-height:11px;color:#000;letter-spacing:-0.11px;">TraceListener.TraceListenerForm</div>
<div class="t" style="left:198px;top:417px;font-size:11px;line-height:11px;color:#000;font-weight:bold;letter-spacing:0.5px;-webkit-text-stroke:0.35px #000;">Method:</div>
<div class="t" style="left:269.5px;top:417px;font-size:11px;line-height:11px;color:#000;letter-spacing:-0.17px;">saveToolStripMenuItem_Click</div>
<div class="t" style="left:198px;top:430px;font-size:11px;line-height:11px;color:#000;font-weight:bold;letter-spacing:0.5px;-webkit-text-stroke:0.35px #000;">Line:</div>
<div class="t" style="left:269.5px;top:430px;font-size:11px;line-height:11px;color:#000;">340</div>
<div class="t" style="left:195px;top:443px;font-size:11px;line-height:11px;color:#000;font-weight:bold;letter-spacing:0.5px;-webkit-text-stroke:0.35px #000;">log4jmachinename</div>
<div class="t" style="left:338.5px;top:443px;font-size:11px;line-height:11px;color:#000;letter-spacing:-0.4px;">ALESI3</div>
<div class="t" style="left:195px;top:456px;font-size:11px;line-height:11px;color:#000;font-weight:bold;letter-spacing:0.5px;-webkit-text-stroke:0.35px #000;">log4net:HostName</div>
<div class="t" style="left:338.5px;top:456px;font-size:11px;line-height:11px;color:#000;letter-spacing:-0.4px;">ALESI3</div>
<div class="t" style="left:195px;top:469px;font-size:11px;line-height:11px;color:#000;font-weight:bold;letter-spacing:0.5px;-webkit-text-stroke:0.35px #000;">log4net:UserName</div>
<div class="t" style="left:338.5px;top:469px;font-size:11px;line-height:11px;color:#000;letter-spacing:-0.25px;">ALESI3\Joe Nachbaur</div>
<div class="t" style="left:195px;top:482px;font-size:11px;line-height:11px;color:#000;font-weight:bold;letter-spacing:0.5px;-webkit-text-stroke:0.35px #000;">log4japp</div>
<div class="t" style="left:269.5px;top:482px;font-size:11px;line-height:11px;color:#000;">TraceListener.vshost.exe</div>
<div class="r" style="left:1px;top:510px;width:761px;height:1px;background:#dadada"></div>
<div class="r" style="left:1px;top:511px;width:761px;height:1px;background:#f8f8f8"></div>
<div class="t" style="left:5px;top:518px;font-size:12px;line-height:12px;color:#000;letter-spacing:-0.17px;">Ready.</div>
<div class="t" style="left:248px;top:518px;font-size:12px;line-height:12px;color:#000;letter-spacing:-0.19px;">root.TraceListener.TraceListenerForm.saveToolStripMenuItem_Click</div>
<div class="r" style="left:610px;top:514px;width:73px;height:17px;border-top:1px solid #a0a0a0;border-left:1px solid #a0a0a0;border-right:1px solid #fff;border-bottom:1px solid #fff;box-sizing:border-box"></div>
<div class="t" style="left:615.5px;top:518px;font-size:12px;line-height:12px;color:#000;letter-spacing:0.03px;">not selected</div>
<div class="r" style="left:685px;top:514px;width:17px;height:17px;border-top:1px solid #a0a0a0;border-left:1px solid #a0a0a0;border-right:1px solid #fff;border-bottom:1px solid #fff;box-sizing:border-box"></div>
<div class="t" style="left:689.5px;top:518px;font-size:12px;line-height:12px;color:#000;">9</div>
<div class="r" style="left:702px;top:514px;width:21px;height:17px;border-top:1px solid #a0a0a0;border-left:1px solid #a0a0a0;border-right:1px solid #fff;border-bottom:1px solid #fff;box-sizing:border-box"></div>
<div class="t" style="left:706.5px;top:518px;font-size:12px;line-height:12px;color:#000;letter-spacing:-0.6px;">29</div>
<div class="r" style="left:725px;top:514px;width:21px;height:17px;border-top:1px solid #a0a0a0;border-left:1px solid #a0a0a0;border-right:1px solid #fff;border-bottom:1px solid #fff;box-sizing:border-box"></div>
<div class="t" style="left:729.5px;top:518px;font-size:12px;line-height:12px;color:#000;letter-spacing:-0.6px;">29</div>
<div class="r" style="left:758px;top:522px;width:2px;height:2px;background:#b0b0b0"></div>
<div class="r" style="left:754px;top:526px;width:2px;height:2px;background:#b0b0b0"></div>
<div class="r" style="left:758px;top:526px;width:2px;height:2px;background:#b0b0b0"></div>
<div class="r" style="left:750px;top:530px;width:2px;height:2px;background:#b0b0b0"></div>
<div class="r" style="left:754px;top:530px;width:2px;height:2px;background:#b0b0b0"></div>
<div class="r" style="left:758px;top:530px;width:2px;height:2px;background:#b0b0b0"></div>
<div class="r" style="left:761px;top:305px;width:1px;height:230px;background:#fbfbfb"></div>
<div class="r" style="left:1px;top:534px;width:761px;height:1px;background:#fbfbfb"></div>
<div class="r" style="left:1px;top:511px;width:1px;height:24px;background:#fbfbfb"></div>
<div class="r" style="left:0px;top:0px;width:763px;height:536px;border:1px solid #1f1f1f;box-sizing:border-box"></div>
</body></html>
